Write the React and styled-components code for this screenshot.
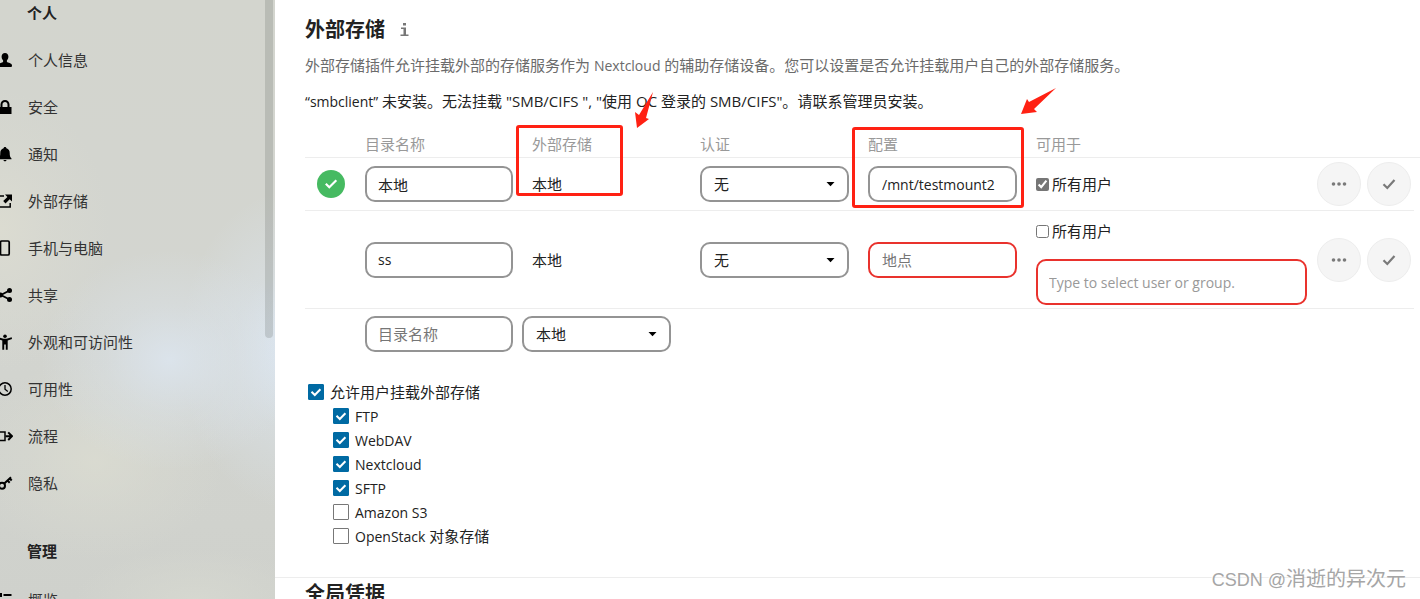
import React from 'react';
import styled, { createGlobalStyle, css } from 'styled-components';

const GlobalStyle = createGlobalStyle`
  * { box-sizing: border-box; }
  body {
    margin: 0;
    background: #fff;
    color: #222;
    font-family: "Open Sans", "Noto Sans CJK SC", sans-serif;
    font-size: 15px;
    line-height: 24px;
  }
  input, select, button { font: inherit; color: inherit; margin: 0; }
`;

const Page = styled.div`
  position: relative;
  display: flex;
  height: 100vh;
  overflow: hidden;
`;

const Sidebar = styled.nav`
  position: relative;
  flex: 0 0 275px;
  overflow: hidden;
  background:
    radial-gradient(ellipse 130px 110px at 170px 360px, rgba(220, 229, 238, 0.9), rgba(220, 229, 238, 0.35) 50%, rgba(220, 229, 238, 0)),
    radial-gradient(ellipse 110px 160px at 290px 350px, rgba(221, 232, 244, 0.95), rgba(221, 232, 244, 0.35) 50%, rgba(221, 232, 244, 0)),
    radial-gradient(ellipse 130px 100px at 95px 460px, rgba(219, 220, 209, 0.8), rgba(219, 220, 209, 0.35) 50%, rgba(219, 220, 209, 0)),
    radial-gradient(ellipse 110px 140px at 0 230px, rgba(220, 220, 209, 0.9), rgba(220, 220, 209, 0.35) 50%, rgba(220, 220, 209, 0)),
    radial-gradient(ellipse 120px 50px at 195px 599px, rgba(214, 216, 208, 0.9), rgba(214, 216, 208, 0)),
    linear-gradient(#d3d5ce, #d3d5d0 50%, #cfd1cc);
`;

const NavHeading = styled.h3`
  margin: 0;
  padding: 0 0 0 27px;
  height: 36px;
  font-size: 15px;
  line-height: 26px;
  font-weight: 700;

  ul + & {
    height: 70px;
    padding-top: 32px;
  }
`;

const NavList = styled.ul`
  list-style: none;
  margin: 0 0 0 -3px;
  padding: 0;
`;

const NavLink = styled.a`
  display: flex;
  align-items: center;
  gap: 15px;
  height: 47px;
  color: #333;
  text-decoration: none;

  svg { flex: none; color: #000; }
`;

const ScrollThumb = styled.div`
  position: absolute;
  top: 0;
  right: 2px;
  width: 8px;
  height: 338px;
  border-radius: 0 0 4px 4px;
  background: rgba(60, 65, 60, 0.17);
`;

const Main = styled.main`
  flex: 1;
  min-width: 0;
`;

const Section = styled.section`
  padding: 15px 0 29px 30px;

  & + & {
    border-top: 1px solid #ededed;
    padding-top: 1px;
  }
`;

const TitleRow = styled.div`
  display: flex;
  align-items: center;
  gap: 11px;
`;

const Title = styled.h2`
  margin: 0;
  font-size: 20px;
  line-height: 30px;
  font-weight: 700;
`;

const InfoLink = styled.a`
  display: flex;
  color: #777;
`;

const Hint = styled.p`
  margin: 8px 0 0;
  color: #6b6b6b;
`;

const Warning = styled.p`
  margin: 11px 0 0;
`;

const Latin = styled.span`
  font-size: 14px;
`;

const MountTable = styled.table`
  width: 100%;
  margin-top: 16px;
  table-layout: fixed;
  border-collapse: separate;
  border-spacing: 0;
`;

const Col = styled.col`
  width: ${(p) => (p.$w ? `${p.$w}px` : 'auto')};
`;

const HeadCell = styled.th`
  height: 28px;
  padding: 0 0 0 ${(p) => (p.$inset ? '10px' : '0')};
  border-bottom: 1px solid #ededed;
  color: #999;
  font-weight: 400;
  text-align: left;
`;

const Cell = styled.td`
  height: ${(p) => (p.$last ? '50px' : '53px')};
  padding: 0 0 0 ${(p) => (p.$inset ? '10px' : '0')};
  border-bottom: ${(p) => (p.$last ? 'none' : '1px solid #ededed')};
  vertical-align: middle;
`;

const StatusBadge = styled.span`
  display: flex;
  align-items: center;
  justify-content: center;
  width: 28px;
  height: 28px;
  margin-left: 12px;
  border-radius: 50%;
  background: #46ba61;
  color: #fff;
`;

const field = css`
  display: block;
  width: ${(p) => (p.$wide ? '149px' : '148px')};
  height: 36px;
  border: 2px solid ${(p) => (p.$invalid ? '#e9322d' : '#949494')};
  border-radius: 10px;
  background: #fff;
  outline: none;
`;

const TextField = styled.input`
  ${field}
  padding: 0 ${(p) => (p.$wide ? '12px' : '11px')};
  font-size: ${(p) => (p.$latin ? '14px' : '15px')};

  &::placeholder { color: #767676; opacity: 1; }
`;

const SelectWrap = styled.span`
  position: relative;
  display: block;
  width: 149px;

  svg {
    position: absolute;
    right: 14px;
    top: 16px;
    pointer-events: none;
  }
`;

const SelectField = styled.select`
  ${field}
  appearance: none;
  padding: 0 12px;
`;

const Applicable = styled.div`
  display: flex;
  flex-direction: column;
  gap: 17px;
  padding: ${(p) => (p.$open ? '10px 10px 3px 0' : '0')};
`;

const UserLabel = styled.label`
  display: flex;
  align-items: center;
  gap: 3px;
  line-height: 21px;
`;

const NativeCheck = styled.input`
  width: 13px;
  height: 13px;
  accent-color: #767676;
`;

const GroupField = styled.input`
  width: 100%;
  height: 46px;
  padding: 0 11px;
  border: 2px solid #e9322d;
  border-radius: 10px;
  font-size: 14px;
  outline: none;

  &::placeholder { color: #999; opacity: 1; }
`;

const RoundButton = styled.button`
  display: flex;
  align-items: center;
  justify-content: center;
  width: 44px;
  height: 44px;
  padding: 0;
  border: 1px solid #ededed;
  border-radius: 50%;
  background: #f5f5f5;
  color: #7a7a7a;
`;

const Options = styled.div`
  margin: 21px 0 0 3px;
`;

const OptionList = styled.ul`
  list-style: none;
  margin: 0 0 0 25px;
  padding: 0;
`;

const OptionLabel = styled.label`
  display: flex;
  align-items: center;
  gap: 6px;
  height: 24px;
  font-size: 15px;
`;

const BoxWrap = styled.span`
  position: relative;
  display: flex;

  svg {
    position: absolute;
    inset: 0;
    pointer-events: none;
  }
`;

const BoxInput = styled.input`
  appearance: none;
  width: 16px;
  height: 16px;
  border: 1px solid #777;
  border-radius: 1px;
  background: #fff;

  &:checked { border-color: #006aa3; background: #006aa3; }
`;

const Highlight = styled.div`
  position: absolute;
  left: ${(p) => p.$x}px;
  top: ${(p) => p.$y}px;
  width: ${(p) => p.$w}px;
  height: ${(p) => p.$h}px;
  border: 3px solid #ff2113;
  border-radius: 3px;
  pointer-events: none;
`;

const Arrow = styled.svg`
  position: absolute;
  left: ${(p) => p.$x}px;
  top: ${(p) => p.$y}px;
  fill: #ff2113;
  pointer-events: none;
`;

const Watermark = styled.div`
  position: absolute;
  right: 14px;
  bottom: 4px;
  color: #a6a6a6;
  font-family: "Liberation Sans", "Noto Sans CJK SC", sans-serif;
  font-size: 20px;
  line-height: 30px;
  text-shadow: -1px -1px 0 #fff;

  span { font-size: 18px; }
`;

const icons = {
  user: <path d="M8 1C5.900 1 4.600 2.500 4.600 4.600c0 1.900.6 2.700 1.400 3.600.3.700.2 1.600-.3 2C3.500 10.900 1 11.500 1 13.500c0 1 .5 1.500 1.500 1.500h11c1 0 1.500-.5 1.500-1.500 0-2-2.500-2.600-4.700-3.300-.5-.4-.6-1.300-.3-2 .8-.9 1.400-1.700 1.400-3.600C11.400 2.500 10.100 1 8 1z" />,
  lock: <path d="M8 1C5.500 1 3.500 3 3.500 5.500V8H1.500v7h13V8h-2V5.500C12.500 3 10.500 1 8 1zm0 2c1.500 0 2.500 1.100 2.500 2.600V8h-5V5.600C5.500 4.100 6.500 3 8 3z" />,
  bell: <path d="M8 1c-.8 0-1.300.5-1.400 1.200C4.300 2.800 3.300 4.600 3.300 7c0 3-.5 4.300-1.800 5.500V13.300h13v-.8c-1.300-1.200-1.800-2.500-1.800-5.500 0-2.400-1-4.200-3.300-4.800C9.300 1.500 8.800 1 8 1zM6.500 14c0 .8.700 1.300 1.500 1.300s1.500-.5 1.500-1.300z" />,
  external: (
    <>
      <path d="M7 3H1.500v11h11.700V10" fill="none" stroke="currentColor" strokeWidth="1.500" />
      <path d="M8 1.500h7v7l-2.300-2.300L8.500 10.400 6.200 8.100l4.200-4.200z" />
    </>
  ),
  phone: <rect x="3.500" y="1" width="8.700" height="14" rx="1.200" fill="none" stroke="currentColor" strokeWidth="1.700" />,
  share: (
    <>
      <path d="M12.500 3.500 4 8l8.500 4.500" fill="none" stroke="currentColor" strokeWidth="1.900" />
      <circle cx="12.500" cy="3.500" r="2.500" />
      <circle cx="3.500" cy="8" r="2.500" />
      <circle cx="12.500" cy="12.500" r="2.500" />
    </>
  ),
  access: (
    <>
      <circle cx="8" cy="2.200" r="1.800" />
      <path d="M1.300 3.300 6.500 4.700h3l5.200-1.400.3 1.700L10.700 6.500V15.700H8.800V10.500H7.200v5.200H5.300V6.500L1 5z" />
    </>
  ),
  clock: (
    <>
      <circle cx="8" cy="8" r="6.200" fill="none" stroke="currentColor" strokeWidth="1.500" />
      <path d="M8 4v4.200l2.800 2.300" fill="none" stroke="currentColor" strokeWidth="1.300" />
    </>
  ),
  flow: (
    <>
      <path d="M8 4H1v8.500h7z" fill="none" stroke="currentColor" strokeWidth="1.500" />
      <path d="M8.500 8.200H15M11.200 4.400l3.800 3.800-3.800 3.800" fill="none" stroke="currentColor" strokeWidth="2" />
    </>
  ),
  key: (
    <>
      <circle cx="5" cy="10.700" r="3" fill="none" stroke="currentColor" strokeWidth="2" />
      <path d="M7 8.800 14 2.300M10.500 5.500l2.200 2.200M12.700 3.500l2 2" fill="none" stroke="currentColor" strokeWidth="2" />
    </>
  ),
  list: <path d="M1 1h4v4H1zM6.500 2h8v2h-8zM1 7h4v4H1zM6.500 8h8v2h-8z" />,
};

const Icon = ({ name }) => (
  <svg width="16" height="16" viewBox="0 0 16 16" fill="currentColor" aria-hidden="true">
    {icons[name]}
  </svg>
);

const Tick = () => (
  <svg width="16" height="16" viewBox="0 0 16 16" fill="none" stroke="currentColor" strokeWidth="2.200" aria-hidden="true">
    <path d="M2.500 8.200 6.300 12 13.500 4" />
  </svg>
);

const personal = [
  ['user', '个人信息'],
  ['lock', '安全'],
  ['bell', '通知'],
  ['external', '外部存储'],
  ['phone', '手机与电脑'],
  ['share', '共享'],
  ['access', '外观和可访问性'],
  ['clock', '可用性'],
  ['flow', '流程'],
  ['key', '隐私'],
];

const admin = [['list', '概览']];

const backends = [
  ['FTP', true],
  ['WebDAV', true],
  ['Nextcloud', true],
  ['SFTP', true],
  ['Amazon S3', false],
];

const NavItems = ({ items }) => (
  <NavList>
    {items.map(([icon, label]) => (
      <li key={label}>
        <NavLink href="#">
          <Icon name={icon} />
          {label}
        </NavLink>
      </li>
    ))}
  </NavList>
);

const Select = ({ label, value }) => (
  <SelectWrap>
    <SelectField aria-label={label} defaultValue={value} $wide>
      <option>{value}</option>
    </SelectField>
    <svg width="9" height="5" viewBox="0 0 9 5" aria-hidden="true">
      <path d="M0.500 0h8L4.500 4.300z" fill="#000" />
    </svg>
  </SelectWrap>
);

const Option = ({ checked, children }) => (
  <OptionLabel>
    <BoxWrap>
      <BoxInput type="checkbox" defaultChecked={checked} />
      {checked && (
        <svg width="16" height="16" viewBox="0 0 16 16" aria-hidden="true">
          <path d="M3.500 7.700 6.800 11 12.400 5.300" fill="none" stroke="#fff" strokeWidth="2" />
        </svg>
      )}
    </BoxWrap>
    <span>{children}</span>
  </OptionLabel>
);

const MountRow = ({ name, latinName, ok, path, allUsers }) => (
  <tr>
    <Cell>
      {ok && (
        <StatusBadge role="img" aria-label="正常">
          <svg width="16" height="16" viewBox="0 0 16 16" aria-hidden="true">
            <path d="M2.800 7.800 6.300 11.300 13.300 4.300" fill="none" stroke="currentColor" strokeWidth="2.200" />
          </svg>
        </StatusBadge>
      )}
    </Cell>
    <Cell>
      <TextField aria-label="目录名称" defaultValue={name} $latin={latinName} />
    </Cell>
    <Cell $inset>本地</Cell>
    <Cell>
      <Select label="认证" value="无" />
    </Cell>
    <Cell>
      <TextField aria-label="配置" placeholder="地点" defaultValue={path} $wide $latin={Boolean(path)} $invalid={!path} />
    </Cell>
    <Cell>
      <Applicable $open={!allUsers}>
        <UserLabel>
          <NativeCheck type="checkbox" defaultChecked={allUsers} />
          所有用户
        </UserLabel>
        {!allUsers && <GroupField aria-label="可用于" placeholder="Type to select user or group." />}
      </Applicable>
    </Cell>
    <Cell>
      <RoundButton type="button" aria-label="更多">
        <svg width="16" height="16" viewBox="0 0 16 16" fill="currentColor" aria-hidden="true">
          <circle cx="2.500" cy="8" r="1.800" />
          <circle cx="8" cy="8" r="1.800" />
          <circle cx="13.500" cy="8" r="1.800" />
        </svg>
      </RoundButton>
    </Cell>
    <Cell>
      <RoundButton type="button" aria-label="保存">
        <Tick />
      </RoundButton>
    </Cell>
  </tr>
);

export default function App() {
  return (
    <>
      <GlobalStyle />
      <Page>
        <Sidebar>
          <NavHeading>个人</NavHeading>
          <NavItems items={personal} />
          <NavHeading>管理</NavHeading>
          <NavItems items={admin} />
          <ScrollThumb />
        </Sidebar>
        <Main>
          <Section>
            <TitleRow>
              <Title>外部存储</Title>
              <InfoLink href="#" aria-label="文档">
                <svg width="16" height="16" viewBox="0 0 16 16" fill="currentColor" aria-hidden="true">
                  <path d="M7 1h3v2.500H7zM5 5.500h5v7h2.500V14H4.500V12.500H7.500V7H5z" />
                </svg>
              </InfoLink>
            </TitleRow>
            <Hint>
              外部存储插件允许挂载外部的存储服务作为 <Latin>Nextcloud</Latin> 的辅助存储设备。您可以设置是否允许挂载用户自己的外部存储服务。
            </Hint>
            <Warning>
              <Latin>“smbclient”</Latin> 未安装。无法挂载 "SMB/CIFS ", "使用 OC 登录的 SMB/CIFS"。请联系管理员安装。
            </Warning>
            <MountTable>
              <colgroup>
                <Col $w={60} />
                <Col $w={157} />
                <Col $w={178} />
                <Col $w={168} />
                <Col $w={168} />
                <Col />
                <Col $w={50} />
                <Col $w={47} />
                <Col $w={6} />
              </colgroup>
              <thead>
                <tr>
                  <HeadCell />
                  <HeadCell>目录名称</HeadCell>
                  <HeadCell $inset>外部存储</HeadCell>
                  <HeadCell>认证</HeadCell>
                  <HeadCell>配置</HeadCell>
                  <HeadCell>可用于</HeadCell>
                  <HeadCell colSpan={3} />
                </tr>
              </thead>
              <tbody>
                <MountRow name="本地" ok path="/mnt/testmount2" allUsers />
                <MountRow name="ss" latinName allUsers={false} />
                <tr>
                  <Cell $last />
                  <Cell $last>
                    <TextField aria-label="新目录名称" placeholder="目录名称" />
                  </Cell>
                  <Cell $last>
                    <Select label="添加存储" value="本地" />
                  </Cell>
                </tr>
              </tbody>
            </MountTable>
            <Options>
              <Option checked>允许用户挂载外部存储</Option>
              <OptionList>
                {backends.map(([label, checked]) => (
                  <li key={label}>
                    <Option checked={checked}>
                      <Latin>{label}</Latin>
                    </Option>
                  </li>
                ))}
                <li>
                  <Option checked={false}>
                    <Latin>OpenStack</Latin> 对象存储
                  </Option>
                </li>
              </OptionList>
            </Options>
          </Section>
          <Section>
            <Title>全局凭据</Title>
          </Section>
        </Main>
        <Highlight $x={516} $y={125} $w={107} $h={71} />
        <Highlight $x={852} $y={127} $w={172} $h={81} />
        <Arrow $x={634} $y={91} width="20" height="38" viewBox="0 0 20 38">
          <path d="M19 1 12 27 15 28 3 37 1 21 5 24z" />
        </Arrow>
        <Arrow $x={1020} $y={87} width="37" height="28" viewBox="0 0 37 28">
          <path d="M36 1 14 22 17 25 1 27 7 12 9 15z" />
        </Arrow>
        <Watermark>
          <span>CSDN @</span>消逝的异次元
        </Watermark>
      </Page>
    </>
  );
}
